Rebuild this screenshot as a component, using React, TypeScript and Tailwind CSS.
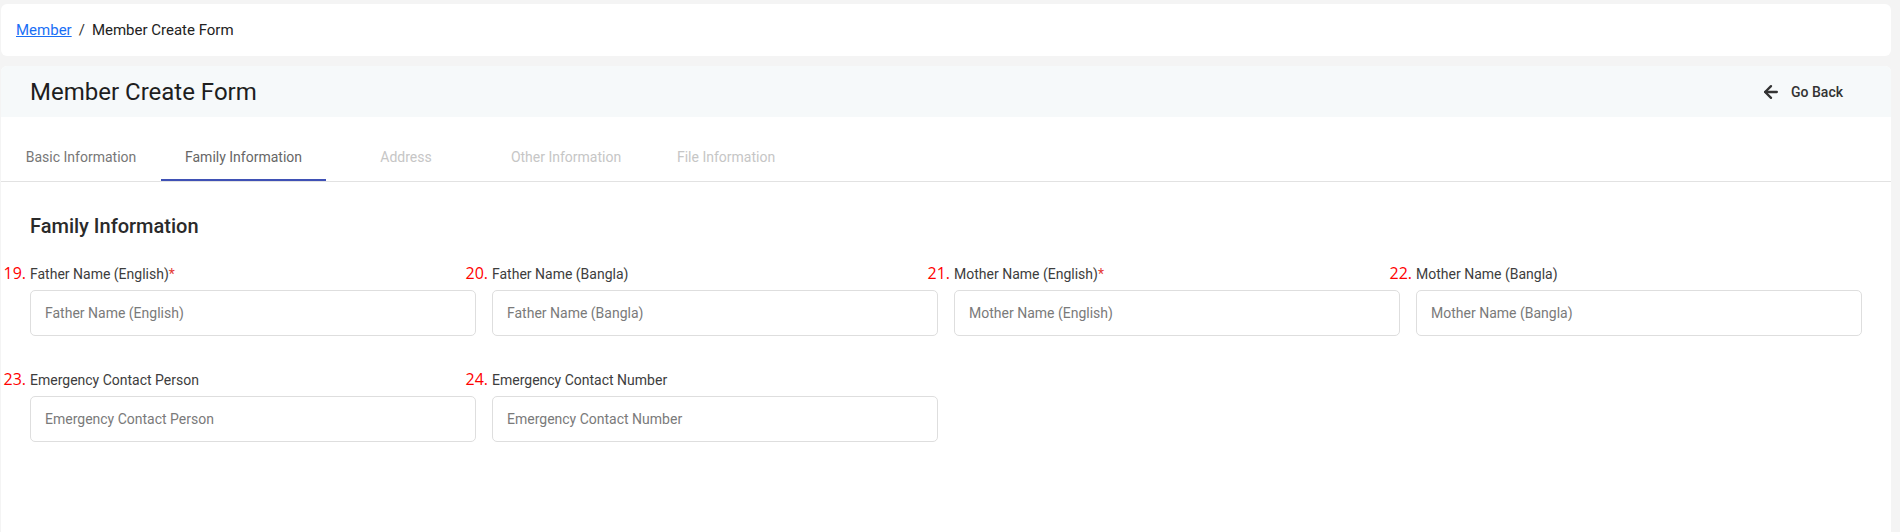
import { ArrowLeft } from 'lucide-react';

type Field = {
  no: number;
  label: string;
  required?: boolean;
};

const tabs = [
  { label: 'Basic Information', state: 'done' },
  { label: 'Family Information', state: 'active' },
  { label: 'Address', state: 'disabled' },
  { label: 'Other Information', state: 'disabled' },
  { label: 'File Information', state: 'disabled' },
];

const fields: Field[] = [
  { no: 19, label: 'Father Name (English)', required: true },
  { no: 20, label: 'Father Name (Bangla)' },
  { no: 21, label: 'Mother Name (English)', required: true },
  { no: 22, label: 'Mother Name (Bangla)' },
  { no: 23, label: 'Emergency Contact Person' },
  { no: 24, label: 'Emergency Contact Number' },
];

function FormField({ field }: { field: Field }) {
  return (
    <div className="flex flex-col">
      <label className="relative mb-[6px] h-5 text-sm leading-5 text-[#3d3d3d]">
        <span className="absolute right-full top-[-1px] mr-[4px] font-['Open_Sans',sans-serif] text-base leading-5 text-[#ff0000]">
          {field.no}.
        </span>
        {field.label}
        {field.required && <span className="text-[#e53935]">*</span>}
      </label>
      <input
        type="text"
        placeholder={field.label}
        className="h-[46px] w-full rounded-[5px] border border-[#dedede] bg-white px-[14px] text-sm text-[#333] outline-none placeholder:text-[#7a7a7a]"
      />
    </div>
  );
}

export default function App() {
  return (
    <div className="min-h-[532px] bg-[#f4f4f4] pl-px pr-[9px] pt-1 font-['Roboto',sans-serif]">
      <div className="flex h-[52px] items-center rounded-md bg-white px-[15px] text-[15px] text-[#222]">
        <a href="#" className="text-[#1a6ff5] underline">
          Member
        </a>
        <span className="mx-[7px] text-[#333]">/</span>
        <span>Member Create Form</span>
      </div>

      <div className="mt-[10px] min-h-[466px] rounded-t-md bg-white">
        <div className="flex h-[51px] items-center justify-between rounded-t-md bg-[#f6f9fa] pl-[29px] pr-[32px]">
          <h1 className="text-2xl font-normal text-[#1e1e1e]">Member Create Form</h1>
          <button type="button" className="flex items-center gap-[10px] px-4 text-sm font-medium text-[#333]">
            <ArrowLeft className="h-5 w-5" strokeWidth={2.8} />
            Go Back
          </button>
        </div>

        <div className="mt-4 flex border-b border-[#e2e2e2]">
          {tabs.map((tab) => (
            <div
              key={tab.label}
              className={
                tab.state === 'active'
                  ? 'relative flex h-12 min-w-[160px] items-center justify-center px-6 text-sm text-[#666]'
                  : tab.state === 'done'
                    ? 'relative flex h-12 min-w-[160px] items-center justify-center px-6 text-sm text-[#777]'
                    : 'relative flex h-12 min-w-[160px] items-center justify-center px-6 text-sm text-[#c6c6c6]'
              }
            >
              {tab.label}
              {tab.state === 'active' && (
                <span className="absolute inset-x-0 bottom-0 h-[2px] bg-[#3f51b5]" />
              )}
            </div>
          ))}
        </div>

        <div className="px-[29px] pt-[30px]">
          <h2 className="mb-6 text-xl font-medium leading-7 text-[#2a2a2a]">Family Information</h2>
          <div className="grid grid-cols-4 gap-x-4 gap-y-[34px]">
            {fields.map((field) => (
              <FormField key={field.no} field={field} />
            ))}
          </div>
        </div>
      </div>
    </div>
  );
}
